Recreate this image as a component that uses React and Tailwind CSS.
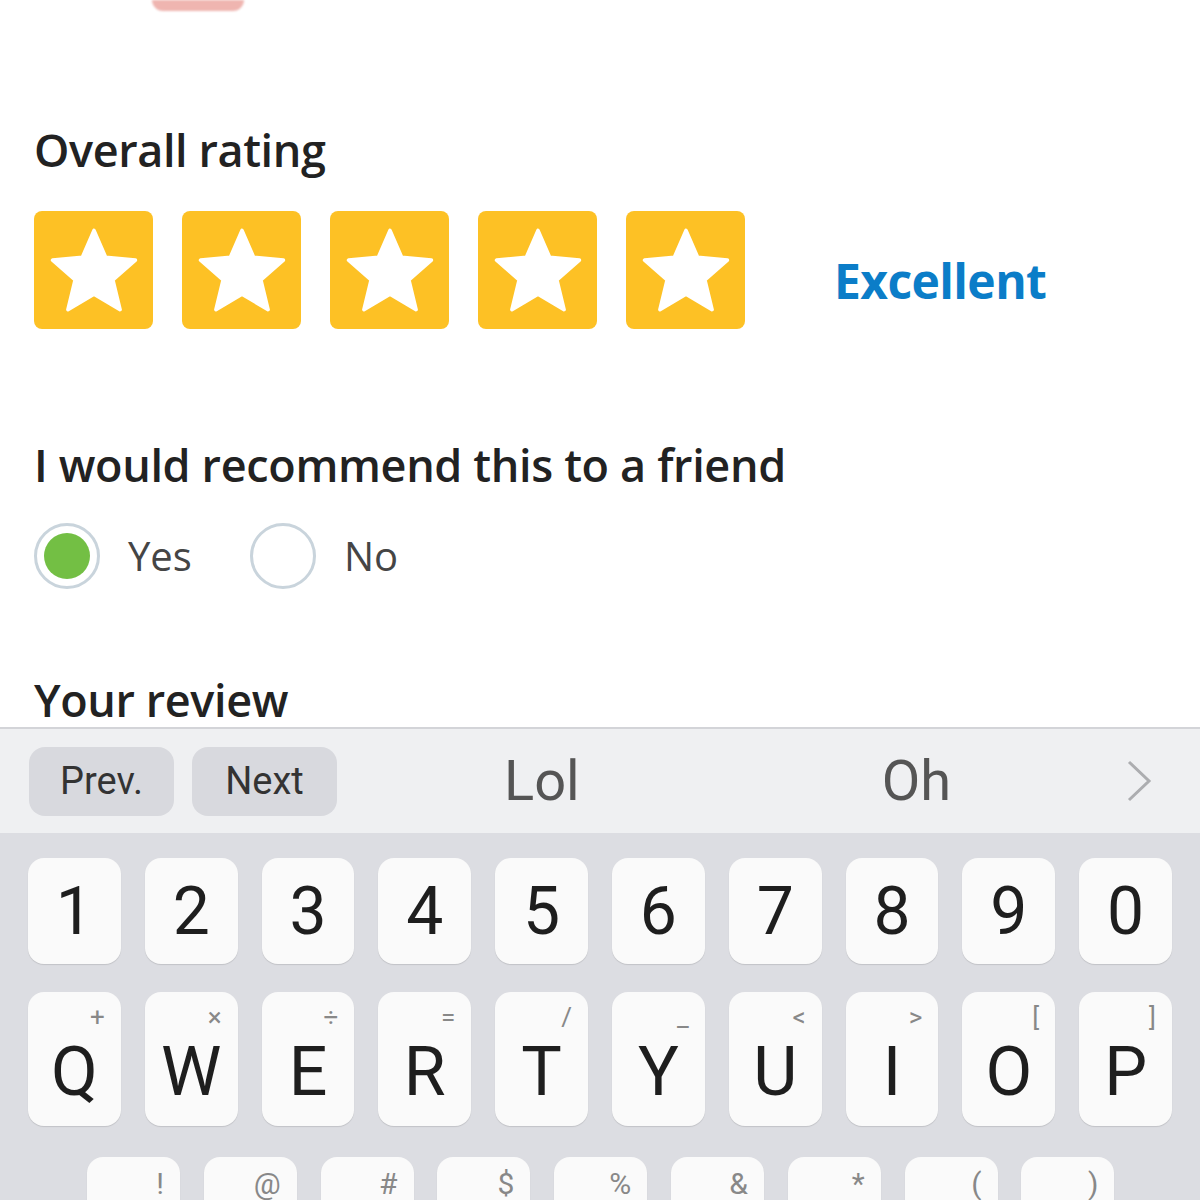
const numbers = ['1', '2', '3', '4', '5', '6', '7', '8', '9', '0']

const letters = [
  { k: 'Q', s: '+' },
  { k: 'W', s: '×' },
  { k: 'E', s: '÷' },
  { k: 'R', s: '=' },
  { k: 'T', s: '/' },
  { k: 'Y', s: '_' },
  { k: 'U', s: '<' },
  { k: 'I', s: '>' },
  { k: 'O', s: '[' },
  { k: 'P', s: ']' },
]

const symbols = ['!', '@', '#', '$', '%', '&', '*', '(', ')']

function Star() {
  return (
    <div className="w-[119px] h-[118px] rounded-[8px] bg-[#fdc125] flex items-center justify-center">
      <svg width="90" height="88" viewBox="0 0 100 96">
        <polygon
          fill="#fff"
          stroke="#fff"
          strokeWidth="4"
          strokeLinejoin="round"
          points="50,4 63,34 96,37 71,59 79,92 50,75 21,92 29,59 4,37 37,34"
        />
      </svg>
    </div>
  )
}

function Radio({ checked, label }) {
  return (
    <div className="flex items-center">
      <div className="w-[66px] h-[66px] rounded-full border-[3px] border-[#c9d4dc] flex items-center justify-center">
        {checked && <div className="w-[46px] h-[46px] rounded-full bg-[#73bf44]"></div>}
      </div>
      <span className="ml-[28px] text-[40px] text-[#454545] font-['Open_Sans',sans-serif]">{label}</span>
    </div>
  )
}

export default function App() {
  return (
    <div className="w-[1200px] h-[1200px] overflow-hidden bg-white flex flex-col">
      {/* Review form */}
      <div className="h-[727px] shrink-0 font-['Open_Sans',sans-serif] text-[#222]">
        {/* bottom edge of product photo */}
        <div className="ml-[152px] w-[92px] h-[11px] rounded-b-[40px] bg-[#efb5b0] blur-[1px]"></div>

        <div className="pl-[34px]">
          <h2 className="mt-[109px] text-[45px] leading-[60px] font-semibold tracking-[-0.4px]">Overall rating</h2>

          <div className="mt-[31px] flex items-center">
            <div className="flex gap-[29px]">
              <Star />
              <Star />
              <Star />
              <Star />
              <Star />
            </div>
            <span className="ml-[89px] mt-[22px] text-[48px] font-bold text-[#0b7dc8] tracking-[-0.6px]">Excellent</span>
          </div>

          <h2 className="mt-[106px] text-[45px] leading-[60px] font-semibold tracking-[-0.35px]">
            I would recommend this to a friend
          </h2>

          <div className="mt-[28px] flex gap-[58px]">
            <Radio checked label="Yes" />
            <Radio label="No" />
          </div>

          <h2 className="mt-[81px] text-[45px] leading-[60px] font-semibold tracking-[-0.4px]">Your review</h2>
        </div>
      </div>

      {/* Keyboard */}
      <div className="flex-1 border-t-[2px] border-[#d3d4d8] bg-[#dcdde2] font-['Roboto',sans-serif]">
        <div className="h-[104px] bg-[#eff0f2] flex items-center px-[29px]">
          <button className="w-[145px] h-[69px] rounded-[16px] bg-[#d8d9de] text-[38px] text-[#333]">Prev.</button>
          <button className="ml-[18px] w-[145px] h-[69px] rounded-[16px] bg-[#d8d9de] text-[38px] text-[#333]">Next</button>
          <span className="ml-[167px] text-[56px] text-[#555]">Lol</span>
          <span className="ml-[302px] text-[56px] text-[#555]">Oh</span>
          <svg className="ml-[175px]" width="26" height="42" viewBox="0 0 26 42">
            <path d="M3 2 L23 21 L3 40" fill="none" stroke="#acadb0" strokeWidth="3" />
          </svg>
        </div>

        <div className="px-[28px] pt-[25px]">
          <div className="grid grid-cols-10 gap-[24px]">
            {numbers.map((n) => (
              <div
                key={n}
                className="h-[106px] rounded-[16px] bg-[#fafafa] shadow-[0_1px_1px_rgba(0,0,0,0.12)] flex items-center justify-center text-[66px] text-[#1e1e1e]"
              >
                {n}
              </div>
            ))}
          </div>

          <div className="mt-[28px] grid grid-cols-10 gap-[24px]">
            {letters.map((l) => (
              <div
                key={l.k}
                className="relative h-[134px] rounded-[16px] bg-[#fafafa] shadow-[0_1px_1px_rgba(0,0,0,0.12)] flex items-end justify-center pb-[20px] text-[68px] leading-none text-[#1e1e1e]"
              >
                <span className="absolute top-[12px] right-[16px] text-[26px] text-[#888]">{l.s}</span>
                {l.k}
              </div>
            ))}
          </div>
        </div>

        <div className="pl-[87px] mt-[31px] flex gap-[23.8px]">
          {symbols.map((s) => (
            <div
              key={s}
              className="relative w-[93px] h-[110px] shrink-0 rounded-[16px] bg-[#fafafa] shadow-[0_1px_1px_rgba(0,0,0,0.12)]"
            >
              <span className="absolute top-[12px] right-[16px] text-[30px] leading-none text-[#888]">{s}</span>
            </div>
          ))}
        </div>
      </div>
    </div>
  )
}
